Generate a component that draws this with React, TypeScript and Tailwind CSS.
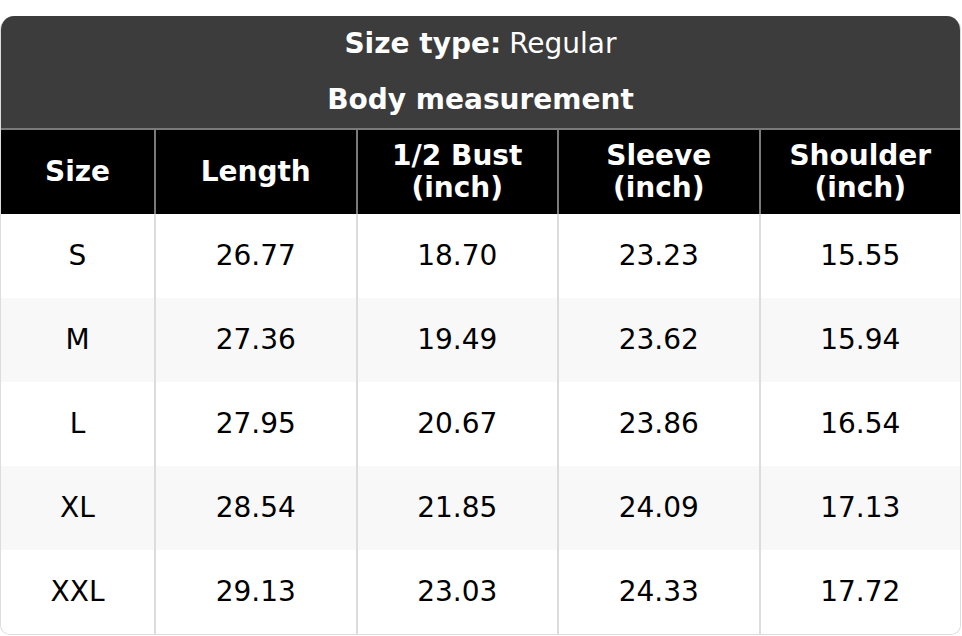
import React from 'react';

const columns = ['Size', 'Length', '1/2 Bust (inch)', 'Sleeve (inch)', 'Shoulder (inch)'];

const rows = [
  ['S', '26.77', '18.70', '23.23', '15.55'],
  ['M', '27.36', '19.49', '23.62', '15.94'],
  ['L', '27.95', '20.67', '23.86', '16.54'],
  ['XL', '28.54', '21.85', '24.09', '17.13'],
  ['XXL', '29.13', '23.03', '24.33', '17.72'],
];

export default function App() {
  return (
    <div className="min-h-screen bg-white pt-4" style={{ fontFamily: '"DejaVu Sans", sans-serif' }}>
      <div className="w-[961px] overflow-hidden rounded-t-[14px] rounded-b-[10px] border-x border-b border-[#dcdcdc]">
        {/* Title */}
        <div className="bg-[#3c3c3c] text-white text-[28px]">
          <div className="h-[56px] flex items-center justify-center">
            <span className="font-bold">Size type:</span>
            <span className="ml-2">Regular</span>
          </div>
          <div className="h-[56px] flex items-center justify-center font-bold">Body measurement</div>
        </div>

        {/* Header row */}
        <div className="grid grid-cols-[153px_repeat(4,1fr)] border-t-2 border-[#7a7a7a] bg-black text-white">
          {columns.map((c, i) => (
            <div
              key={c}
              className={`h-[84px] flex items-center justify-center text-center font-bold text-[28px] leading-[32px] px-2 ${
                i > 0 ? 'border-l-2 border-[#7a7a7a]' : ''
              }`}
            >
              {c.includes('(') ? (
                <span>
                  {c.replace(' (inch)', '')}
                  <br />
                  (inch)
                </span>
              ) : (
                c
              )}
            </div>
          ))}
        </div>

        {/* Body rows */}
        {rows.map((r, ri) => (
          <div
            key={r[0]}
            className={`grid grid-cols-[153px_repeat(4,1fr)] ${ri % 2 === 1 ? 'bg-[#f8f8f8]' : 'bg-white'}`}
          >
            {r.map((v, i) => (
              <div
                key={i}
                className={`h-[84px] flex items-center justify-center text-[28px] text-black ${
                  i > 0 ? 'border-l-2 border-[#dcdcdc]' : ''
                }`}
              >
                {v}
              </div>
            ))}
          </div>
        ))}
      </div>
    </div>
  );
}
